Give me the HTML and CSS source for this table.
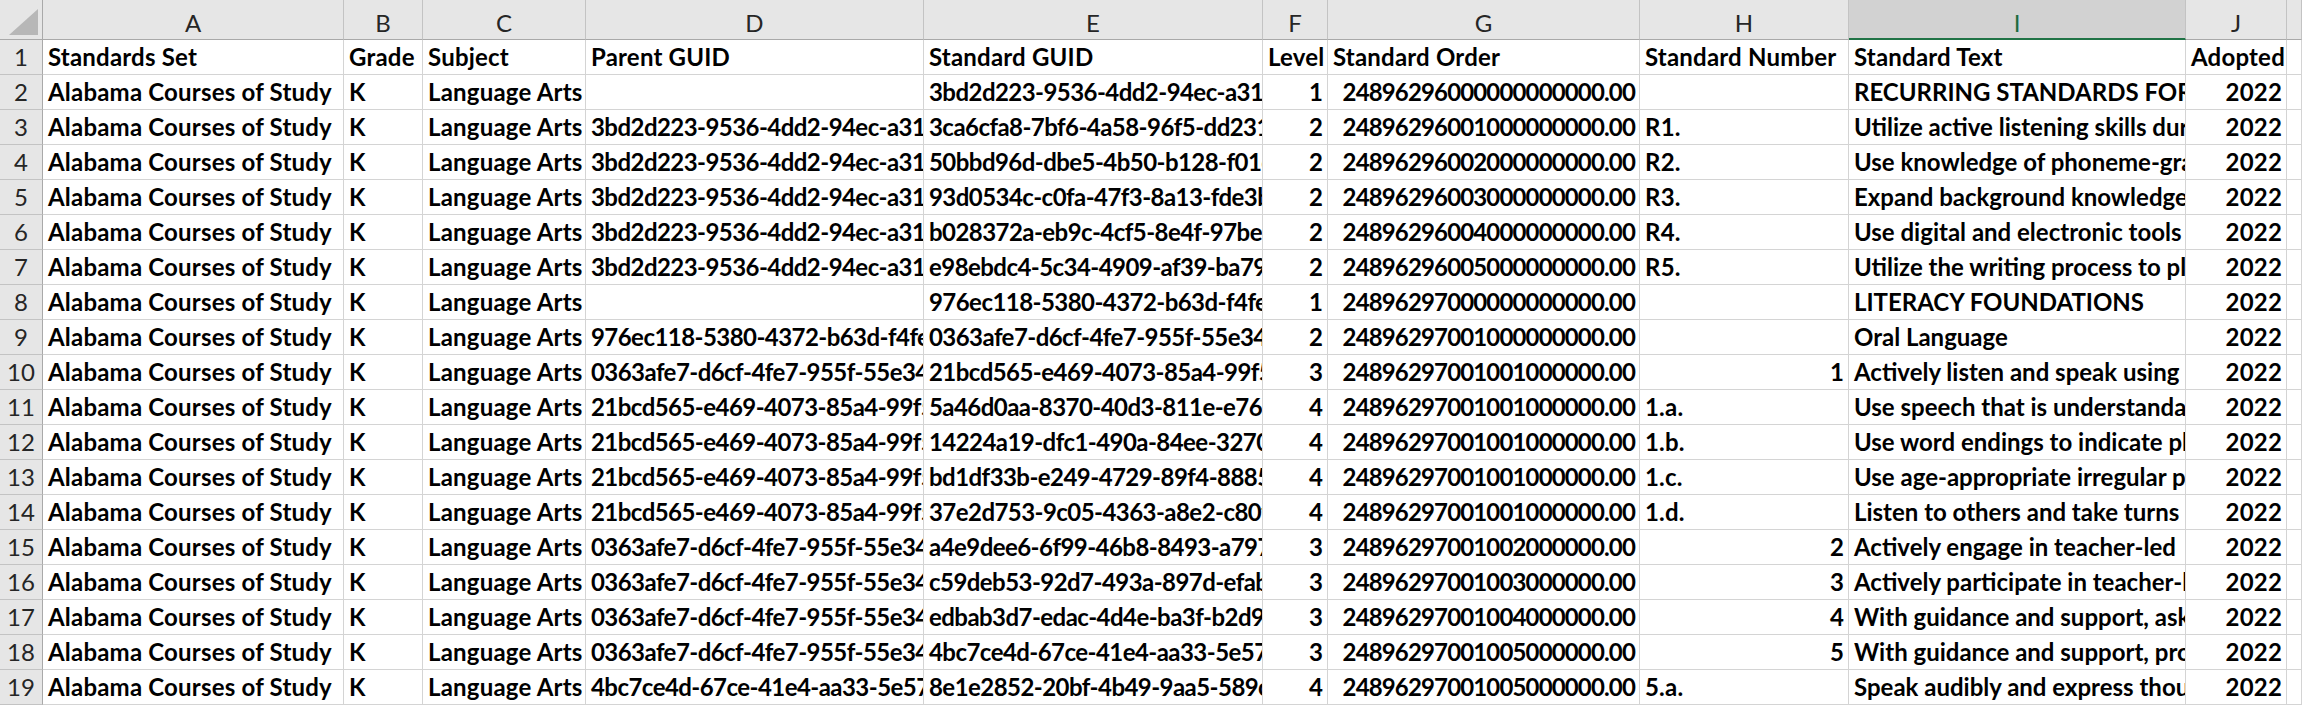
FILE: index.html
```html
<!DOCTYPE html>
<html>
<head>
<meta charset="utf-8">
<link rel="stylesheet" href="styles.css">
</head>
<body>
<div class="sheet">
  <div class="ch corner"><svg class="tri" width="30" height="27" viewBox="0 0 30 27"><polygon points="29,0 29,26 0,26" fill="#b7b7b7"/></svg></div>
  <div class="ch">A</div><div class="ch">B</div><div class="ch">C</div><div class="ch">D</div><div class="ch">E</div><div class="ch">F</div><div class="ch">G</div><div class="ch">H</div><div class="ch sel">I</div><div class="ch">J</div><div class="ch"></div>

  <div class="rh">1</div><div class="c">Standards Set</div><div class="c">Grade</div><div class="c">Subject</div><div class="c">Parent GUID</div><div class="c">Standard GUID</div><div class="c">Level</div><div class="c">Standard Order</div><div class="c">Standard Number</div><div class="c">Standard Text</div><div class="c">Adopted</div><div class="c"></div>

  <div class="rh">2</div><div class="c">Alabama Courses of Study</div><div class="c">K</div><div class="c">Language Arts</div><div class="c g"></div><div class="c g">3bd2d223-9536-4dd2-94ec-a31b4c7e9d2f</div><div class="c n">1</div><div class="c n ord">24896296000000000000.00</div><div class="c"></div><div class="c t">RECURRING STANDARDS FOR KINDERGARTEN</div><div class="c n">2022</div><div class="c"></div>

  <div class="rh">3</div><div class="c">Alabama Courses of Study</div><div class="c">K</div><div class="c">Language Arts</div><div class="c g">3bd2d223-9536-4dd2-94ec-a31b4c7e9d2f</div><div class="c g">3ca6cfa8-7bf6-4a58-96f5-dd231e0a6b44</div><div class="c n">2</div><div class="c n ord">24896296001000000000.00</div><div class="c">R1.</div><div class="c t">Utilize active listening skills during discussion</div><div class="c n">2022</div><div class="c"></div>

  <div class="rh">4</div><div class="c">Alabama Courses of Study</div><div class="c">K</div><div class="c">Language Arts</div><div class="c g">3bd2d223-9536-4dd2-94ec-a31b4c7e9d2f</div><div class="c g">50bbd96d-dbe5-4b50-b128-f01c3a9e27d8</div><div class="c n">2</div><div class="c n ord">24896296002000000000.00</div><div class="c">R2.</div><div class="c t">Use knowledge of phoneme-grapheme</div><div class="c n">2022</div><div class="c"></div>

  <div class="rh">5</div><div class="c">Alabama Courses of Study</div><div class="c">K</div><div class="c">Language Arts</div><div class="c g">3bd2d223-9536-4dd2-94ec-a31b4c7e9d2f</div><div class="c g">93d0534c-c0fa-47f3-8a13-fde3b71c0e55</div><div class="c n">2</div><div class="c n ord">24896296003000000000.00</div><div class="c">R3.</div><div class="c t">Expand background knowledge and</div><div class="c n">2022</div><div class="c"></div>

  <div class="rh">6</div><div class="c">Alabama Courses of Study</div><div class="c">K</div><div class="c">Language Arts</div><div class="c g">3bd2d223-9536-4dd2-94ec-a31b4c7e9d2f</div><div class="c g">b028372a-eb9c-4cf5-8e4f-97be0d4a13c6</div><div class="c n">2</div><div class="c n ord">24896296004000000000.00</div><div class="c">R4.</div><div class="c t">Use digital and electronic tools</div><div class="c n">2022</div><div class="c"></div>

  <div class="rh">7</div><div class="c">Alabama Courses of Study</div><div class="c">K</div><div class="c">Language Arts</div><div class="c g">3bd2d223-9536-4dd2-94ec-a31b4c7e9d2f</div><div class="c g">e98ebdc4-5c34-4909-af39-ba79f2c8e610</div><div class="c n">2</div><div class="c n ord">24896296005000000000.00</div><div class="c">R5.</div><div class="c t">Utilize the writing process to plan</div><div class="c n">2022</div><div class="c"></div>

  <div class="rh">8</div><div class="c">Alabama Courses of Study</div><div class="c">K</div><div class="c">Language Arts</div><div class="c g"></div><div class="c g">976ec118-5380-4372-b63d-f4fe8a1c2d09</div><div class="c n">1</div><div class="c n ord">24896297000000000000.00</div><div class="c"></div><div class="c t">LITERACY FOUNDATIONS</div><div class="c n">2022</div><div class="c"></div>

  <div class="rh">9</div><div class="c">Alabama Courses of Study</div><div class="c">K</div><div class="c">Language Arts</div><div class="c g">976ec118-5380-4372-b63d-f4fe8a1c2d09</div><div class="c g">0363afe7-d6cf-4fe7-955f-55e34b9a0c17</div><div class="c n">2</div><div class="c n ord">24896297001000000000.00</div><div class="c"></div><div class="c t">Oral Language</div><div class="c n">2022</div><div class="c"></div>

  <div class="rh">10</div><div class="c">Alabama Courses of Study</div><div class="c">K</div><div class="c">Language Arts</div><div class="c g">0363afe7-d6cf-4fe7-955f-55e34b9a0c17</div><div class="c g">21bcd565-e469-4073-85a4-99f5d02e7b31</div><div class="c n">3</div><div class="c n ord">24896297001001000000.00</div><div class="c n">1</div><div class="c t">Actively listen and speak using</div><div class="c n">2022</div><div class="c"></div>

  <div class="rh">11</div><div class="c">Alabama Courses of Study</div><div class="c">K</div><div class="c">Language Arts</div><div class="c g">21bcd565-e469-4073-85a4-99f5d02e7b31</div><div class="c g">5a46d0aa-8370-40d3-811e-e76b2c4f9a08</div><div class="c n">4</div><div class="c n ord">24896297001001000000.00</div><div class="c">1.a.</div><div class="c t">Use speech that is understandable</div><div class="c n">2022</div><div class="c"></div>

  <div class="rh">12</div><div class="c">Alabama Courses of Study</div><div class="c">K</div><div class="c">Language Arts</div><div class="c g">21bcd565-e469-4073-85a4-99f5d02e7b31</div><div class="c g">14224a19-dfc1-490a-84ee-3270b9d5c6e2</div><div class="c n">4</div><div class="c n ord">24896297001001000000.00</div><div class="c">1.b.</div><div class="c t">Use word endings to indicate plurals</div><div class="c n">2022</div><div class="c"></div>

  <div class="rh">13</div><div class="c">Alabama Courses of Study</div><div class="c">K</div><div class="c">Language Arts</div><div class="c g">21bcd565-e469-4073-85a4-99f5d02e7b31</div><div class="c g">bd1df33b-e249-4729-89f4-88850a7e1c3d</div><div class="c n">4</div><div class="c n ord">24896297001001000000.00</div><div class="c">1.c.</div><div class="c t">Use age-appropriate irregular past</div><div class="c n">2022</div><div class="c"></div>

  <div class="rh">14</div><div class="c">Alabama Courses of Study</div><div class="c">K</div><div class="c">Language Arts</div><div class="c g">21bcd565-e469-4073-85a4-99f5d02e7b31</div><div class="c g">37e2d753-9c05-4363-a8e2-c80f4b1d6a27</div><div class="c n">4</div><div class="c n ord">24896297001001000000.00</div><div class="c">1.d.</div><div class="c t">Listen to others and take turns</div><div class="c n">2022</div><div class="c"></div>

  <div class="rh">15</div><div class="c">Alabama Courses of Study</div><div class="c">K</div><div class="c">Language Arts</div><div class="c g">0363afe7-d6cf-4fe7-955f-55e34b9a0c17</div><div class="c g">a4e9dee6-6f99-46b8-8493-a797c1e05b8f</div><div class="c n">3</div><div class="c n ord">24896297001002000000.00</div><div class="c n">2</div><div class="c t">Actively engage in teacher-led</div><div class="c n">2022</div><div class="c"></div>

  <div class="rh">16</div><div class="c">Alabama Courses of Study</div><div class="c">K</div><div class="c">Language Arts</div><div class="c g">0363afe7-d6cf-4fe7-955f-55e34b9a0c17</div><div class="c g">c59deb53-92d7-493a-897d-efab6c1d2e40</div><div class="c n">3</div><div class="c n ord">24896297001003000000.00</div><div class="c n">3</div><div class="c t">Actively participate in teacher-led</div><div class="c n">2022</div><div class="c"></div>

  <div class="rh">17</div><div class="c">Alabama Courses of Study</div><div class="c">K</div><div class="c">Language Arts</div><div class="c g">0363afe7-d6cf-4fe7-955f-55e34b9a0c17</div><div class="c g">edbab3d7-edac-4d4e-ba3f-b2d9e07a4c15</div><div class="c n">3</div><div class="c n ord">24896297001004000000.00</div><div class="c n">4</div><div class="c t">With guidance and support, ask</div><div class="c n">2022</div><div class="c"></div>

  <div class="rh">18</div><div class="c">Alabama Courses of Study</div><div class="c">K</div><div class="c">Language Arts</div><div class="c g">0363afe7-d6cf-4fe7-955f-55e34b9a0c17</div><div class="c g">4bc7ce4d-67ce-41e4-aa33-5e57a8d21f60</div><div class="c n">3</div><div class="c n ord">24896297001005000000.00</div><div class="c n">5</div><div class="c t">With guidance and support, provide</div><div class="c n">2022</div><div class="c"></div>

  <div class="rh">19</div><div class="c">Alabama Courses of Study</div><div class="c">K</div><div class="c">Language Arts</div><div class="c g">4bc7ce4d-67ce-41e4-aa33-5e57a8d21f60</div><div class="c g">8e1e2852-20bf-4b49-9aa5-589c3d7e0b12</div><div class="c n">4</div><div class="c n ord">24896297001005000000.00</div><div class="c">5.a.</div><div class="c t">Speak audibly and express thoughts</div><div class="c n">2022</div><div class="c"></div>
</div>
</body>
</html>
```

FILE: styles.css
```css
html, body {
  margin: 0;
  padding: 0;
  background: #ffffff;
  overflow: hidden;
}

.sheet {
  display: grid;
  grid-template-columns: 43px 301px 79px 163px 338px 339px 65px 312px 209px 337px 101px 1fr;
  grid-template-rows: 40px repeat(19, 35px);
  width: 2302px;
  height: 706px;
  font-family: Lato, "Liberation Sans", sans-serif;
  font-size: 24px;
  color: #000;
}

.ch {
  box-sizing: border-box;
  background: #e6e6e6;
  border-right: 1px solid #c3c3c3;
  border-bottom: 1px solid #a9a9a9;
  color: #262626;
  font-weight: 400;
  text-align: center;
  padding-top: 8px;
  line-height: 30px;
}

.ch.sel {
  background: #d2d2d2;
  border-bottom: 2px solid #217346;
  color: #1d6b40;
}

.corner {
  display: flex;
  align-items: flex-end;
  justify-content: flex-end;
  padding: 0 3px 3px 0;
  border-right: 1px solid #a9a9a9;
}

.tri {
  display: block;
}

.rh {
  box-sizing: border-box;
  background: #e6e6e6;
  border-right: 1px solid #a9a9a9;
  border-bottom: 1px solid #c3c3c3;
  color: #262626;
  text-align: center;
  line-height: 34px;
}

.c {
  box-sizing: border-box;
  border-right: 1px solid #d4d4d4;
  border-bottom: 1px solid #d4d4d4;
  font-weight: 700;
  white-space: nowrap;
  overflow: hidden;
  padding: 0 4px 0 5px;
  line-height: 34px;
  letter-spacing: 0.2px;
}

.c.n {
  text-align: right;
}

.c.ord {
  letter-spacing: -0.85px;
}

.c.g {
  letter-spacing: -0.55px;
}

.c.t {
  letter-spacing: 0;
}
```
